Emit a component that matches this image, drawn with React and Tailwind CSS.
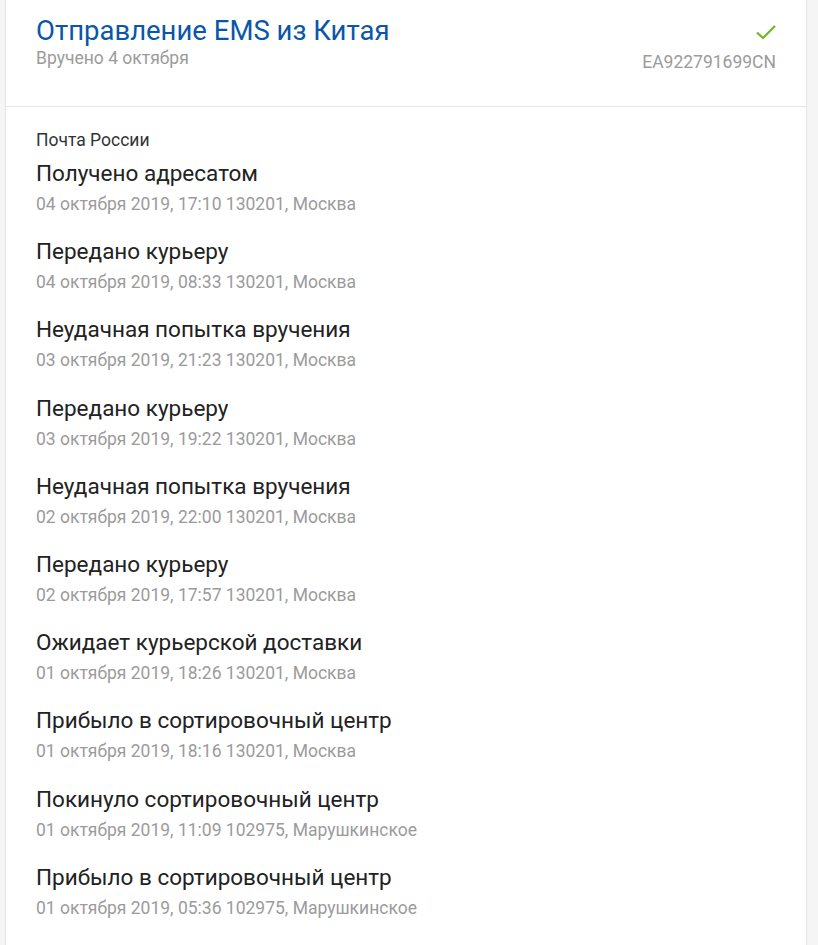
import React from "react";

const events = [
  { title: "Получено адресатом", date: "04 октября 2019, 17:10", place: "130201, Москва" },
  { title: "Передано курьеру", date: "04 октября 2019, 08:33", place: "130201, Москва" },
  { title: "Неудачная попытка вручения", date: "03 октября 2019, 21:23", place: "130201, Москва" },
  { title: "Передано курьеру", date: "03 октября 2019, 19:22", place: "130201, Москва" },
  { title: "Неудачная попытка вручения", date: "02 октября 2019, 22:00", place: "130201, Москва" },
  { title: "Передано курьеру", date: "02 октября 2019, 17:57", place: "130201, Москва" },
  { title: "Ожидает курьерской доставки", date: "01 октября 2019, 18:26", place: "130201, Москва" },
  { title: "Прибыло в сортировочный центр", date: "01 октября 2019, 18:16", place: "130201, Москва" },
  { title: "Покинуло сортировочный центр", date: "01 октября 2019, 11:09", place: "102975, Марушкинское" },
  { title: "Прибыло в сортировочный центр", date: "01 октября 2019, 05:36", place: "102975, Марушкинское" },
];

function Check() {
  return (
    <svg width="22" height="18" viewBox="0 0 22 18" fill="none">
      <path d="M2 9.5 L8 15 L20 3" stroke="#72b62a" strokeWidth="2.3" />
    </svg>
  );
}

export default function App() {
  return (
    <div className="min-h-screen bg-[#f5f5f5] font-['Roboto',sans-serif]">
      <div className="ml-[5px] w-[802px] min-h-screen bg-white border-x border-[#e6e6e6]">
        <div className="flex justify-between h-[107px] border-b border-[#e6e6e6] px-[30px] pt-[16px]">
          <div>
            <h1 className="text-[27.5px] leading-[30px] text-[#0a56a8]">Отправление EMS из Китая</h1>
            <div className="text-[17.5px] leading-[24px] text-[#9b9b9b]">Вручено 4 октября</div>
          </div>
          <div className="flex flex-col items-end">
            <div className="mt-[7px] mr-[-1px]">
              <Check />
            </div>
            <div className="mt-[9px] text-[17.5px] leading-[24px] text-[#9b9b9b]">EA922791699CN</div>
          </div>
        </div>
        <div className="px-[30px] pt-[22px]">
          <div className="text-[17.5px] leading-[22px] text-[#333]">Почта России</div>
          <div className="mt-[8px] flex flex-col gap-[21.2px]">
            {events.map((e, i) => (
              <div key={i}>
                <div className="text-[22.5px] leading-[28px] text-[#222]">{e.title}</div>
                <div className="mt-[5px] text-[17.5px] leading-[24px] text-[#9b9b9b]">
                  {e.date} {e.place}
                </div>
              </div>
            ))}
          </div>
        </div>
      </div>
    </div>
  );
}
